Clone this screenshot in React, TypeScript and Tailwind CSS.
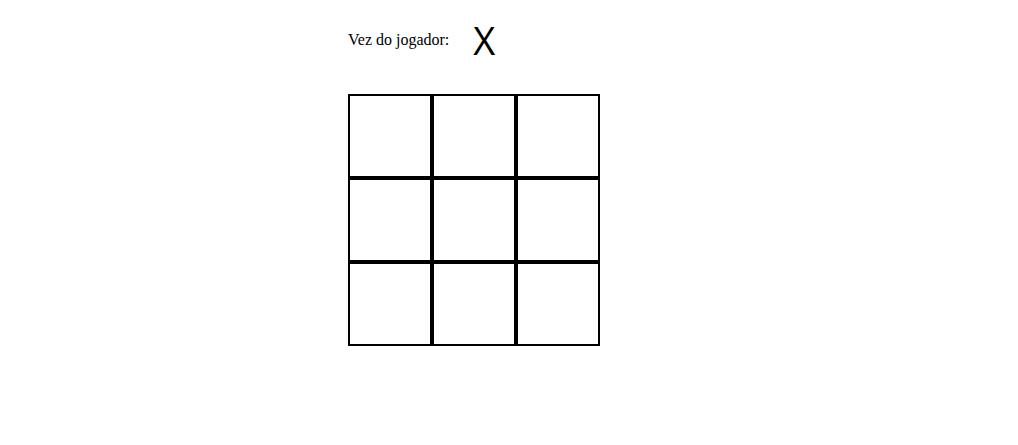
import React, { useState } from 'react';

type Player = 'X' | 'O';

function Mark({ player }: { player: Player }) {
  return (
    <span className="flex size-[70px] shrink-0 items-center justify-center pb-0.5 font-['Open_Sans',sans-serif] text-[38px] leading-[52px] font-medium text-black">
      {player}
    </span>
  );
}

export default function App() {
  const [cells, setCells] = useState<(Player | null)[]>(Array(9).fill(null));
  const [turn, setTurn] = useState<Player>('X');

  const play = (index: number) => {
    if (cells[index]) return;
    setCells(cells.map((cell, i) => (i === index ? turn : cell)));
    setTurn(turn === 'X' ? 'O' : 'X');
  };

  return (
    <main className="min-h-screen bg-white pl-[348px] pt-1.5 font-['Liberation_Serif',serif] text-base text-black">
      <div className="flex h-[70px] items-center">
        <p className="pb-0.5">Vez do jogador:</p>
        <Mark player={turn} />
      </div>
      <div className="mt-[18px] grid w-max grid-cols-3">
        {cells.map((cell, index) => (
          <button
            key={index}
            type="button"
            aria-label={`Casa ${index + 1}`}
            onClick={() => play(index)}
            className="flex size-[84px] items-center justify-center border-2 border-black bg-white"
          >
            {cell && <Mark player={cell} />}
          </button>
        ))}
      </div>
    </main>
  );
}
